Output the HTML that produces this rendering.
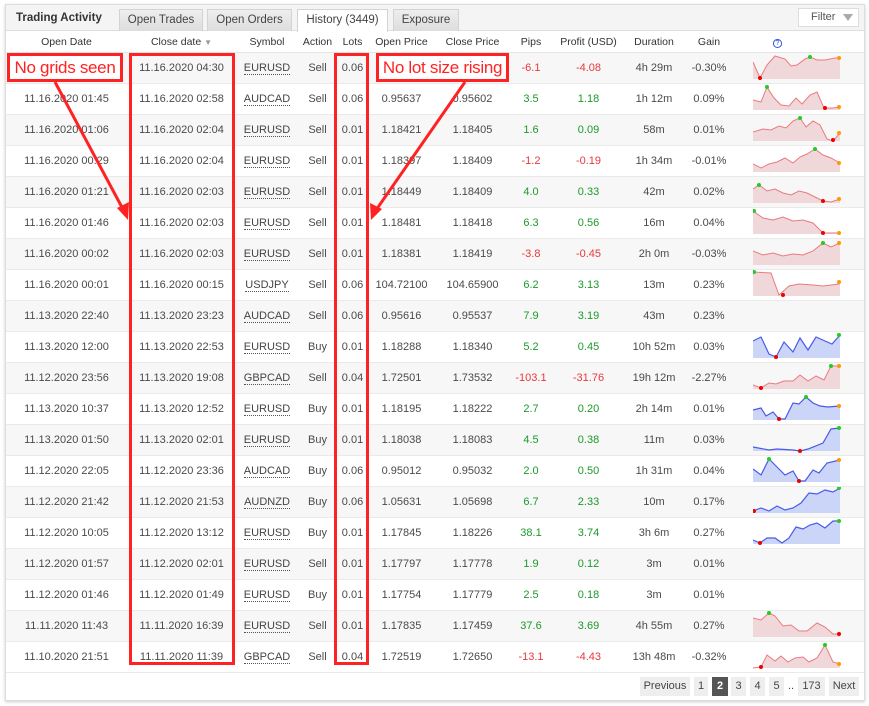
<!DOCTYPE html>
<html><head><meta charset="utf-8"><style>
*{margin:0;padding:0;box-sizing:border-box}
body{width:869px;height:706px;background:#fff;font-family:"Liberation Sans",Arial,sans-serif;font-size:11px;color:#4a4a4a;position:relative;overflow:hidden}
.panel{position:absolute;left:5px;top:4px;width:860px;height:697px;border:1px solid #ddd;box-shadow:0 1px 3px #ccc;background:#fff}
.top{position:absolute;left:6px;top:5px;width:858px;height:26px;background:#f4f4f4;border-bottom:1px solid #ddd}
.title{position:absolute;left:16px;top:12px;font-weight:bold;font-size:11.5px;color:#333}
.tab{position:absolute;top:9px;height:22px;background:linear-gradient(#eee,#ddd);border:1px solid #d3d3d3;border-bottom:none;color:#444;font-size:11.5px;text-align:center;line-height:21px}
.tab.act{background:#fff;height:23px}
.filter{position:absolute;left:798px;top:8px;width:61px;height:19px;background:#fff;border:1px solid #ddd;color:#555;line-height:17px;padding-left:12px;font-size:11px}
.filter:after{content:"";position:absolute;right:5px;top:5px;border:5px solid transparent;border-top:7px solid #aaa;border-bottom:none}
table{position:absolute;left:6px;top:32px;border-collapse:collapse;table-layout:fixed;width:858px}
th{height:20px;font-weight:normal;color:#333;font-size:10.5px;border-bottom:1px solid #e4e4e4}
td{height:31px;text-align:center;border-bottom:1px solid #eaeaea;white-space:nowrap}
tr:nth-child(even) td{background:#f7f7f7}
.s{border-bottom:1px dotted #555;color:#444}
.g{color:#1c9a2c}.r{color:#e8383d}
td svg{display:block;margin-left:18px;margin-top:-1px}
.ann{position:absolute;border:3px solid #f22;background:#fff;color:#f22;font-size:17px;line-height:23px;text-align:center;white-space:nowrap;letter-spacing:-0.3px;overflow:hidden}
.box{position:absolute;border:3px solid #f22}
.pg{position:absolute;top:677px;height:19px;background:#eee;color:#444;text-align:center;line-height:19px;font-size:11px}
.pg.on{background:#555;color:#fff;font-weight:bold}
</style></head><body>
<div class="panel"></div>
<div class="top"></div>
<div class="title">Trading Activity</div>
<div class="tab" style="left:119px;width:84px">Open Trades</div>
<div class="tab" style="left:207px;width:85px">Open Orders</div>
<div class="tab act" style="left:297px;width:91px">History (3449)</div>
<div class="tab" style="left:393px;width:66px">Exposure</div>
<div class="filter">Filter</div>
<table>
<colgroup><col style="width:121px"><col style="width:109px"><col style="width:62px"><col style="width:39px"><col style="width:31px"><col style="width:67px"><col style="width:75px"><col style="width:42px"><col style="width:73px"><col style="width:58px"><col style="width:52px"><col></colgroup>
<tr><th>Open Date</th><th>Close date <span style="color:#999;font-size:8px">▼</span></th><th>Symbol</th><th>Action</th><th>Lots</th><th>Open Price</th><th>Close Price</th><th>Pips</th><th>Profit (USD)</th><th>Duration</th><th>Gain</th><th><span style="color:#3355dd;border:1px solid #3355dd;border-radius:50%;font-size:7px;padding:0 2px;margin-left:-44px">?</span></th></tr>
<tr><td></td><td>11.16.2020 04:30</td><td><span class="s">EURUSD</span></td><td>Sell</td><td>0.06</td><td></td><td></td><td class="r">-6.1</td><td class="r">-4.08</td><td>4h 29m</td><td>-0.30%</td><td><svg width="88" height="28"><polygon points="0,26 0,9 7,25 14,12 22,3 32,6 38,13 44,12 52,6 57,4 64,7 72,7 82,5 87,5 87,26" fill="#f0d8da"/><polyline points="0,9 7,25 14,12 22,3 32,6 38,13 44,12 52,6 57,4 64,7 72,7 82,5 87,5" fill="none" stroke="#ea7a80"/><circle cx="7" cy="25" r="2" fill="#e00"/><circle cx="57" cy="4" r="2" fill="#2c2"/><circle cx="86" cy="5" r="2" fill="#f90"/></svg></td></tr>
<tr><td>11.16.2020 01:45</td><td>11.16.2020 02:58</td><td><span class="s">AUDCAD</span></td><td>Sell</td><td>0.06</td><td>0.95637</td><td>0.95602</td><td class="g">3.5</td><td class="g">1.18</td><td>1h 12m</td><td>0.09%</td><td><svg width="88" height="28"><polygon points="0,26 0,16 8,18 14,3 21,14 28,21 36,22 43,14 49,20 57,11 64,8 71,24 80,24 87,23 87,26" fill="#f0d8da"/><polyline points="0,16 8,18 14,3 21,14 28,21 36,22 43,14 49,20 57,11 64,8 71,24 80,24 87,23" fill="none" stroke="#ea7a80"/><circle cx="14" cy="3" r="2" fill="#2c2"/><circle cx="72" cy="24" r="2" fill="#e00"/><circle cx="86" cy="23" r="2" fill="#f90"/></svg></td></tr>
<tr><td>11.16.2020 01:06</td><td>11.16.2020 02:04</td><td><span class="s">EURUSD</span></td><td>Sell</td><td>0.01</td><td>1.18421</td><td>1.18405</td><td class="g">1.6</td><td class="g">0.09</td><td>58m</td><td>0.01%</td><td><svg width="88" height="28"><polygon points="0,26 0,17 10,14 18,15 26,11 33,13 40,6 47,3 53,12 60,6 67,10 74,24 80,26 87,18 87,26" fill="#f0d8da"/><polyline points="0,17 10,14 18,15 26,11 33,13 40,6 47,3 53,12 60,6 67,10 74,24 80,26 87,18" fill="none" stroke="#ea7a80"/><circle cx="47" cy="3" r="2" fill="#2c2"/><circle cx="80" cy="25" r="2" fill="#e00"/><circle cx="86" cy="18" r="2" fill="#f90"/></svg></td></tr>
<tr><td>11.16.2020 00:29</td><td>11.16.2020 02:04</td><td><span class="s">EURUSD</span></td><td>Sell</td><td>0.01</td><td>1.18397</td><td>1.18409</td><td class="r">-1.2</td><td class="r">-0.19</td><td>1h 34m</td><td>-0.01%</td><td><svg width="88" height="28"><polygon points="0,26 0,18 8,22 16,18 24,16 32,12 40,17 47,11 54,8 62,3 70,9 78,12 87,17 87,26" fill="#f0d8da"/><polyline points="0,18 8,22 16,18 24,16 32,12 40,17 47,11 54,8 62,3 70,9 78,12 87,17" fill="none" stroke="#ea7a80"/><circle cx="62" cy="3" r="2" fill="#2c2"/><circle cx="86" cy="17" r="2" fill="#f90"/></svg></td></tr>
<tr><td>11.16.2020 01:21</td><td>11.16.2020 02:03</td><td><span class="s">EURUSD</span></td><td>Sell</td><td>0.01</td><td>1.18449</td><td>1.18409</td><td class="g">4.0</td><td class="g">0.33</td><td>42m</td><td>0.02%</td><td><svg width="88" height="28"><polygon points="0,26 0,12 6,8 14,14 22,12 30,16 38,18 46,14 54,16 62,20 70,24 78,25 87,22 87,26" fill="#f0d8da"/><polyline points="0,12 6,8 14,14 22,12 30,16 38,18 46,14 54,16 62,20 70,24 78,25 87,22" fill="none" stroke="#ea7a80"/><circle cx="6" cy="8" r="2" fill="#2c2"/><circle cx="70" cy="24" r="2" fill="#e00"/><circle cx="86" cy="22" r="2" fill="#f90"/></svg></td></tr>
<tr><td>11.16.2020 01:46</td><td>11.16.2020 02:03</td><td><span class="s">EURUSD</span></td><td>Sell</td><td>0.01</td><td>1.18481</td><td>1.18418</td><td class="g">6.3</td><td class="g">0.56</td><td>16m</td><td>0.04%</td><td><svg width="88" height="28"><polygon points="0,26 0,3 10,10 20,12 30,9 40,13 50,12 60,15 70,25 87,25 87,26" fill="#f0d8da"/><polyline points="0,3 10,10 20,12 30,9 40,13 50,12 60,15 70,25 87,25" fill="none" stroke="#ea7a80"/><circle cx="1" cy="3" r="2" fill="#2c2"/><circle cx="70" cy="25" r="2" fill="#e00"/><circle cx="86" cy="25" r="2" fill="#f90"/></svg></td></tr>
<tr><td>11.16.2020 00:02</td><td>11.16.2020 02:03</td><td><span class="s">EURUSD</span></td><td>Sell</td><td>0.01</td><td>1.18381</td><td>1.18419</td><td class="r">-3.8</td><td class="r">-0.45</td><td>2h 0m</td><td>-0.03%</td><td><svg width="88" height="28"><polygon points="0,26 0,12 10,16 20,14 30,17 40,15 50,16 60,12 70,4 78,8 87,4 87,26" fill="#f0d8da"/><polyline points="0,12 10,16 20,14 30,17 40,15 50,16 60,12 70,4 78,8 87,4" fill="none" stroke="#ea7a80"/><circle cx="70" cy="4" r="2" fill="#2c2"/><circle cx="86" cy="4" r="2" fill="#f90"/></svg></td></tr>
<tr><td>11.16.2020 00:01</td><td>11.16.2020 00:15</td><td><span class="s">USDJPY</span></td><td>Sell</td><td>0.06</td><td>104.72100</td><td>104.65900</td><td class="g">6.2</td><td class="g">3.13</td><td>13m</td><td>0.23%</td><td><svg width="88" height="28"><polygon points="0,26 0,2 18,3 26,25 36,16 46,14 60,15 70,16 86,14 87,12 87,26" fill="#f0d8da"/><polyline points="0,2 18,3 26,25 36,16 46,14 60,15 70,16 86,14 87,12" fill="none" stroke="#ea7a80"/><circle cx="1" cy="2" r="2" fill="#2c2"/><circle cx="30" cy="25" r="2" fill="#e00"/><circle cx="86" cy="12" r="2" fill="#f90"/></svg></td></tr>
<tr><td>11.13.2020 22:40</td><td>11.13.2020 23:23</td><td><span class="s">AUDCAD</span></td><td>Sell</td><td>0.06</td><td>0.95616</td><td>0.95537</td><td class="g">7.9</td><td class="g">3.19</td><td>43m</td><td>0.23%</td><td></td></tr>
<tr><td>11.13.2020 12:00</td><td>11.13.2020 22:53</td><td><span class="s">EURUSD</span></td><td>Buy</td><td>0.01</td><td>1.18288</td><td>1.18340</td><td class="g">5.2</td><td class="g">0.45</td><td>10h 52m</td><td>0.03%</td><td><svg width="88" height="28"><polygon points="0,26 0,9 8,5 16,22 23,25 31,10 40,20 47,6 55,18 63,5 72,9 79,12 87,3 87,26" fill="#cbd5f8"/><polyline points="0,9 8,5 16,22 23,25 31,10 40,20 47,6 55,18 63,5 72,9 79,12 87,3" fill="none" stroke="#4a5ae6" stroke-width="1.2"/><circle cx="23" cy="25" r="2" fill="#e00"/><circle cx="86" cy="3" r="2" fill="#2c2"/></svg></td></tr>
<tr><td>11.12.2020 23:56</td><td>11.13.2020 19:08</td><td><span class="s">GBPCAD</span></td><td>Sell</td><td>0.04</td><td>1.72501</td><td>1.73532</td><td class="r">-103.1</td><td class="r">-31.76</td><td>19h 12m</td><td>-2.27%</td><td><svg width="88" height="28"><polygon points="0,26 0,22 8,25 16,20 23,21 31,18 40,18 47,12 55,18 63,13 71,17 78,3 87,3 87,26" fill="#f0d8da"/><polyline points="0,22 8,25 16,20 23,21 31,18 40,18 47,12 55,18 63,13 71,17 78,3 87,3" fill="none" stroke="#ea7a80"/><circle cx="8" cy="25" r="2" fill="#e00"/><circle cx="78" cy="3" r="2" fill="#2c2"/><circle cx="86" cy="3" r="2" fill="#f90"/></svg></td></tr>
<tr><td>11.13.2020 10:37</td><td>11.13.2020 12:52</td><td><span class="s">EURUSD</span></td><td>Buy</td><td>0.01</td><td>1.18195</td><td>1.18222</td><td class="g">2.7</td><td class="g">0.20</td><td>2h 14m</td><td>0.01%</td><td><svg width="88" height="28"><polygon points="0,26 0,16 8,14 13,22 20,18 26,25 32,25 40,9 46,10 53,3 60,9 67,12 75,13 87,12 87,26" fill="#cbd5f8"/><polyline points="0,16 8,14 13,22 20,18 26,25 32,25 40,9 46,10 53,3 60,9 67,12 75,13 87,12" fill="none" stroke="#4a5ae6" stroke-width="1.2"/><circle cx="26" cy="25" r="2" fill="#e00"/><circle cx="53" cy="3" r="2" fill="#2c2"/><circle cx="86" cy="12" r="2" fill="#f90"/></svg></td></tr>
<tr><td>11.13.2020 01:50</td><td>11.13.2020 02:01</td><td><span class="s">EURUSD</span></td><td>Buy</td><td>0.01</td><td>1.18038</td><td>1.18083</td><td class="g">4.5</td><td class="g">0.38</td><td>11m</td><td>0.03%</td><td><svg width="88" height="28"><polygon points="0,26 0,22 16,25 24,24 40,25 47,26 55,24 70,18 78,4 87,3 87,26" fill="#cbd5f8"/><polyline points="0,22 16,25 24,24 40,25 47,26 55,24 70,18 78,4 87,3" fill="none" stroke="#4a5ae6" stroke-width="1.2"/><circle cx="47" cy="26" r="2" fill="#e00"/><circle cx="86" cy="3" r="2" fill="#2c2"/></svg></td></tr>
<tr><td>11.12.2020 22:05</td><td>11.12.2020 23:36</td><td><span class="s">AUDCAD</span></td><td>Buy</td><td>0.06</td><td>0.95012</td><td>0.95032</td><td class="g">2.0</td><td class="g">0.50</td><td>1h 31m</td><td>0.04%</td><td><svg width="88" height="28"><polygon points="0,26 0,13 8,19 16,3 24,11 32,19 40,15 46,25 52,25 60,14 66,17 74,7 87,4 87,26" fill="#cbd5f8"/><polyline points="0,13 8,19 16,3 24,11 32,19 40,15 46,25 52,25 60,14 66,17 74,7 87,4" fill="none" stroke="#4a5ae6" stroke-width="1.2"/><circle cx="16" cy="3" r="2" fill="#2c2"/><circle cx="46" cy="25" r="2" fill="#e00"/><circle cx="86" cy="4" r="2" fill="#f90"/></svg></td></tr>
<tr><td>11.12.2020 21:42</td><td>11.12.2020 21:53</td><td><span class="s">AUDNZD</span></td><td>Buy</td><td>0.06</td><td>1.05631</td><td>1.05698</td><td class="g">6.7</td><td class="g">2.33</td><td>10m</td><td>0.17%</td><td><svg width="88" height="28"><polygon points="0,26 0,24 8,21 16,24 24,19 32,23 40,21 48,16 56,6 64,7 72,3 80,5 87,1 87,26" fill="#cbd5f8"/><polyline points="0,24 8,21 16,24 24,19 32,23 40,21 48,16 56,6 64,7 72,3 80,5 87,1" fill="none" stroke="#4a5ae6" stroke-width="1.2"/><circle cx="1" cy="24" r="2" fill="#e00"/><circle cx="86" cy="1" r="2" fill="#2c2"/></svg></td></tr>
<tr><td>11.12.2020 10:05</td><td>11.12.2020 13:12</td><td><span class="s">EURUSD</span></td><td>Buy</td><td>0.01</td><td>1.17845</td><td>1.18226</td><td class="g">38.1</td><td class="g">3.74</td><td>3h 6m</td><td>0.27%</td><td><svg width="88" height="28"><polygon points="0,26 0,22 7,25 14,20 22,20 29,25 36,20 43,9 50,11 57,7 64,5 72,10 80,3 87,3 87,26" fill="#cbd5f8"/><polyline points="0,22 7,25 14,20 22,20 29,25 36,20 43,9 50,11 57,7 64,5 72,10 80,3 87,3" fill="none" stroke="#4a5ae6" stroke-width="1.2"/><circle cx="7" cy="25" r="2" fill="#e00"/><circle cx="86" cy="3" r="2" fill="#2c2"/></svg></td></tr>
<tr><td>11.12.2020 01:57</td><td>11.12.2020 02:01</td><td><span class="s">EURUSD</span></td><td>Sell</td><td>0.01</td><td>1.17797</td><td>1.17778</td><td class="g">1.9</td><td class="g">0.12</td><td>3m</td><td>0.01%</td><td></td></tr>
<tr><td>11.12.2020 01:46</td><td>11.12.2020 01:49</td><td><span class="s">EURUSD</span></td><td>Buy</td><td>0.01</td><td>1.17754</td><td>1.17779</td><td class="g">2.5</td><td class="g">0.18</td><td>3m</td><td>0.01%</td><td></td></tr>
<tr><td>11.11.2020 11:43</td><td>11.11.2020 16:39</td><td><span class="s">EURUSD</span></td><td>Sell</td><td>0.01</td><td>1.17835</td><td>1.17459</td><td class="g">37.6</td><td class="g">3.69</td><td>4h 55m</td><td>0.27%</td><td><svg width="88" height="28"><polygon points="0,26 0,7 8,9 16,2 22,5 30,15 38,14 46,20 54,20 64,12 72,16 80,23 87,23 87,26" fill="#f0d8da"/><polyline points="0,7 8,9 16,2 22,5 30,15 38,14 46,20 54,20 64,12 72,16 80,23 87,23" fill="none" stroke="#ea7a80"/><circle cx="16" cy="2" r="2" fill="#2c2"/><circle cx="86" cy="23" r="2" fill="#e00"/></svg></td></tr>
<tr><td>11.10.2020 21:51</td><td>11.11.2020 11:39</td><td><span class="s">GBPCAD</span></td><td>Sell</td><td>0.04</td><td>1.72519</td><td>1.72650</td><td class="r">-13.1</td><td class="r">-4.43</td><td>13h 48m</td><td>-0.32%</td><td><svg width="88" height="28"><polygon points="0,26 0,26 8,25 14,13 22,19 28,14 35,20 42,16 50,15 56,20 64,16 72,3 80,20 87,22 87,26" fill="#f0d8da"/><polyline points="0,26 8,25 14,13 22,19 28,14 35,20 42,16 50,15 56,20 64,16 72,3 80,20 87,22" fill="none" stroke="#ea7a80"/><circle cx="8" cy="25" r="2" fill="#e00"/><circle cx="72" cy="3" r="2" fill="#2c2"/><circle cx="86" cy="22" r="2" fill="#f90"/></svg></td></tr>
</table>
<div class="pg" style="left:640px;width:50px">Previous</div>
<div class="pg" style="left:694px;width:14px">1</div>
<div class="pg on" style="left:712px;width:16px">2</div>
<div class="pg" style="left:731px;width:15px">3</div>
<div class="pg" style="left:750px;width:15px">4</div>
<div class="pg" style="left:769px;width:15px">5</div>
<div style="position:absolute;left:788px;top:680px;color:#444">..</div>
<div class="pg" style="left:798px;width:27px">173</div>
<div class="pg" style="left:829px;width:30px">Next</div>
<div class="box" style="left:129px;top:53px;width:106px;height:612px"></div>
<div class="box" style="left:334px;top:53px;width:35px;height:612px"></div>
<div class="ann" style="left:7px;top:53px;width:116px;height:29px">No grids seen</div>
<div class="ann" style="left:376px;top:53px;width:133px;height:29px">No lot size rising</div>
<svg style="position:absolute;left:0;top:0" width="869" height="706"><g stroke="#f22" stroke-width="3" fill="none"><line x1="55" y1="82" x2="125" y2="213"/><line x1="465" y1="82" x2="374" y2="213"/></g><polygon points="128,220 117,208 129,202" fill="#f22"/><polygon points="371,220 370,203 382,209" fill="#f22"/></svg>
</body></html>
